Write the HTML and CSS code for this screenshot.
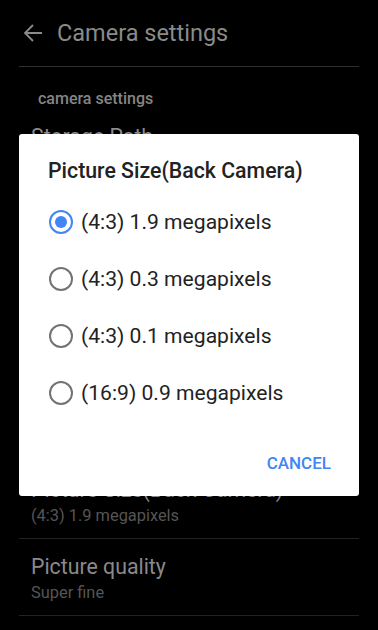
FILE: index.html
```html
<!DOCTYPE html>
<html>
<head>
<meta charset="utf-8">
<link rel="stylesheet" href="styles.css">
</head>
<body>
<div class="screen">
  <header class="appbar">
    <svg class="back" width="20" height="20" viewBox="0 0 20 20"><path d="M19 10H2.5M10 2L2 10l8 8" fill="none" stroke="#8a8a8a" stroke-width="1.8"/></svg>
    <h1 class="appbar-title">Camera settings</h1>
  </header>
  <div class="list">
    <div class="category">camera settings</div>
    <div class="item">
      <div class="item-title">Storage Path</div>
      <div class="item-sub">Phone</div>
    </div>
    <div class="category small">photo</div>
    <div class="item">
      <div class="item-title">Shutter sound</div>
      <div class="item-sub">On</div>
    </div>
    <div class="item">
      <div class="item-title">Location info</div>
      <div class="item-sub">Off</div>
    </div>
    <div class="item">
      <div class="item-title">Countdown timer</div>
      <div class="item-sub">Off</div>
    </div>
    <div class="item">
      <div class="item-title">Picture Size(Back Camera)</div>
      <div class="item-sub">(4:3) 1.9 megapixels</div>
    </div>
    <div class="item">
      <div class="item-title">Picture quality</div>
      <div class="item-sub">Super fine</div>
    </div>
  </div>

  <div class="dialog">
    <div class="dialog-title">Picture Size(Back Camera)</div>
    <div class="options">
      <div class="option"><span class="radio checked"></span><span class="option-label">(4:3) 1.9 megapixels</span></div>
      <div class="option"><span class="radio"></span><span class="option-label">(4:3) 0.3 megapixels</span></div>
      <div class="option"><span class="radio"></span><span class="option-label">(4:3) 0.1 megapixels</span></div>
      <div class="option"><span class="radio"></span><span class="option-label">(16:9) 0.9 megapixels</span></div>
    </div>
    <div class="actions"><span class="btn">CANCEL</span></div>
  </div>
</div>
</body>
</html>
```
FILE: styles.css
```css
html, body {
  margin: 0;
  padding: 0;
  background: #000;
}
body {
  font-family: Roboto, "Noto Sans", "Liberation Sans", sans-serif;
}
.screen {
  position: relative;
  width: 378px;
  height: 630px;
  overflow: hidden;
  background: #000;
}
.appbar {
  display: flex;
  align-items: center;
  height: 66px;
  margin: 0 19px;
  padding-left: 4px;
  border-bottom: 1px solid #2e2e2e;
}
.back {
  flex: none;
  margin-right: 14px;
}
.appbar-title {
  margin: 0;
  font-size: 23.5px;
  font-weight: 400;
  color: #8a8a8a;
  line-height: 28px;
}
.list {
  display: flex;
  flex-direction: column;
}
.category {
  height: 42px;
  box-sizing: border-box;
  padding: 22px 0 0 38px;
  font-size: 16px;
  font-weight: 500;
  line-height: 20px;
  color: #858585;
}
.category.small {
  height: 45px;
}
.item {
  margin: 0 19px;
  padding: 15px 12px 9px;
  border-bottom: 1px solid #222;
  height: 52px;
}
.item-title {
  font-size: 21.3px;
  line-height: 26px;
  color: #8a8a8a;
}
.item-sub {
  font-size: 16.4px;
  line-height: 26px;
  color: #555;
}
.dialog {
  position: absolute;
  left: 19px;
  top: 134px;
  width: 340px;
  height: 362px;
  box-sizing: border-box;
  background: #fff;
  border-radius: 3px;
  padding: 23px 28px 23px 0;
  display: flex;
  flex-direction: column;
}
.dialog-title {
  padding-left: 29px;
  font-size: 21.3px;
  font-weight: 500;
  line-height: 28px;
  color: #222;
}
.options {
  margin-top: 8px;
  padding-left: 30px;
  display: flex;
  flex-direction: column;
}
.option {
  height: 57px;
  display: flex;
  align-items: center;
}
.radio {
  width: 24px;
  height: 24px;
  box-sizing: border-box;
  border: 2px solid #737373;
  border-radius: 50%;
  margin-right: 8px;
  display: flex;
  align-items: center;
  justify-content: center;
  flex: none;
}
.radio.checked {
  border-color: #4285f4;
}
.radio.checked::after {
  content: "";
  width: 12px;
  height: 12px;
  border-radius: 50%;
  background: #4285f4;
}
.option-label {
  font-size: 21.1px;
  color: #222;
  line-height: 24px;
}
.actions {
  margin-top: auto;
  display: flex;
  justify-content: flex-end;
}
.btn {
  font-size: 17px;
  font-weight: 500;
  line-height: 20px;
  color: #4285f4;
}
```
